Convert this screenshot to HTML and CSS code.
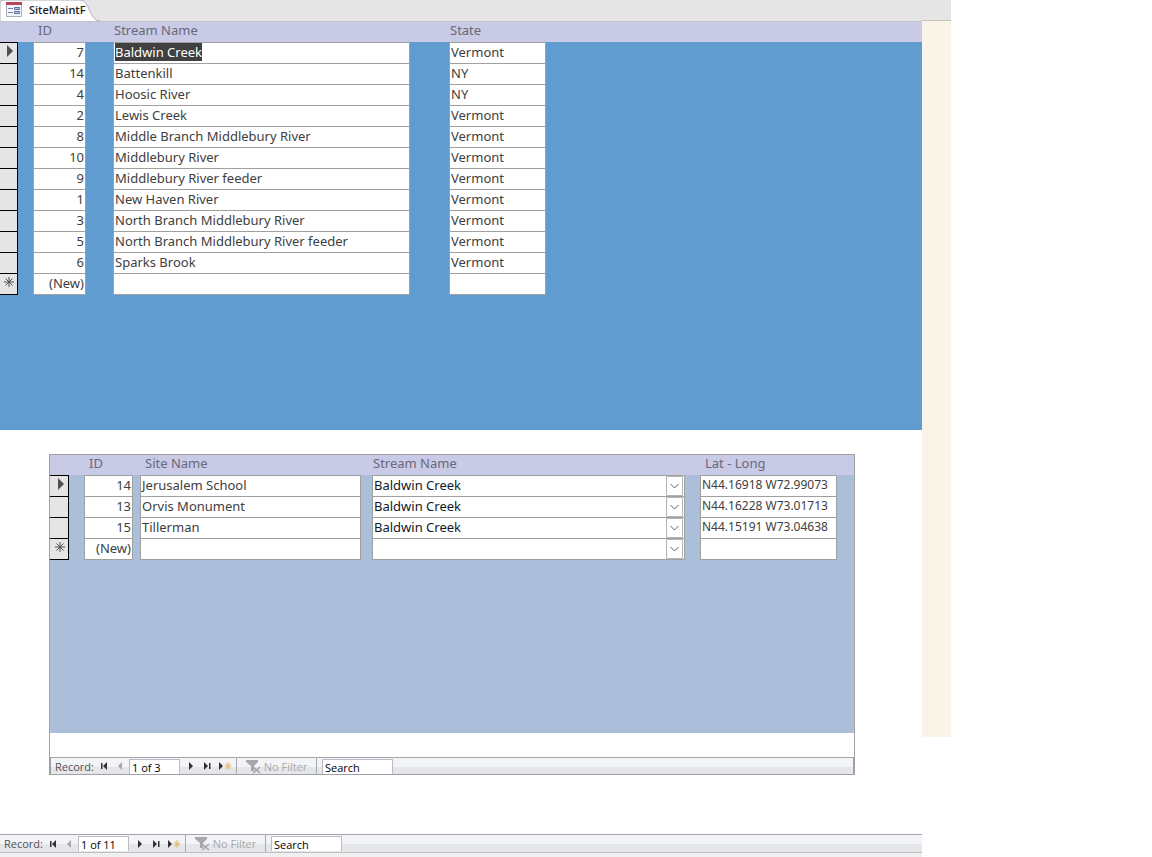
FILE: index.html
```html
<!DOCTYPE html>
<html lang="en">
<head>
<meta charset="utf-8">
<title>SiteMaintF</title>
<link rel="stylesheet" href="styles.css">
</head>
<body>
<svg class="defs" aria-hidden="true">
  <symbol id="first" viewBox="0 0 7 8"><path d="M0 1h1.500v6H0zM6 0v8L2 4z"/></symbol>
  <symbol id="prev" viewBox="0 0 7 8"><path d="M5 0v8L1 4z"/></symbol>
  <symbol id="next" viewBox="0 0 7 8"><path d="M1 0v8L5 4z"/></symbol>
  <symbol id="last" viewBox="0 0 7 8"><path d="M0 0v8L4 4zM5 1h1.500v6H5z"/></symbol>
  <symbol id="new" viewBox="0 0 13 8"><path d="M0 0v8L4 4z"/><path d="M9 0v8M5.500 4h7M6.500 1.500l5 5M11.500 1.500l-5 5" stroke="#e3b764" fill="none"/></symbol>
  <symbol id="filter" viewBox="0 0 15 15"><path d="M0 1h12v2L8 7v5H5V7L0 3z"/><path d="M7 8l7 6M14 8l-7 6" stroke="#a3a3a6" stroke-width="1.500" fill="none"/></symbol>
  <symbol id="current" viewBox="0 0 6 12"><path d="M0 0v12L6 6z"/></symbol>
  <symbol id="star" viewBox="0 0 10 10"><path d="M5 0v10M0 5h10M1.500 1.500l7 7M8.500 1.500l-7 7" stroke="#505050" fill="none"/></symbol>
</svg>
<div class="app">
  <header class="tabs">
    <div class="tab">
      <svg class="tab-shape" viewBox="0 0 100 21" aria-hidden="true"><path d="M0 21V3Q0 0 4 0H80C90 0 89 21 100 21z" fill="#fff"/><path d="M0 21V3Q0 0 4 0H80C90 0 89 21 100 21" fill="none" stroke="#b0b0b0"/></svg>
      <svg class="tab-icon" viewBox="0 0 16 15" aria-hidden="true"><path d="M.5.5h15v14H.5z" fill="#f4f5fb" stroke="#a9adc2"/><path d="M0 0h16v3H0z" fill="#b6455c"/><path d="M2 6.500h5M2 10.500h5" stroke="#7a84aa"/><path d="M8.500 5.500h5v2h-5zM8.500 9.500h5v2h-5z" fill="#b9c4e6" stroke="#5f6fa3"/></svg>
      <span class="tab-name">SiteMaintF</span>
    </div>
  </header>
  <main class="form">
    <section class="streams">
      <table class="grid">
        <colgroup><col class="w18"><col class="w15"><col class="w53"><col class="w27"><col class="w297"><col class="w39"><col class="w97"><col></colgroup>
        <thead><tr><th></th><th></th><th class="inset">ID</th><th></th><th>Stream Name</th><th></th><th>State</th><th></th></tr></thead>
        <tbody>
          <tr><td class="sel"><svg class="current"><use href="#current"/></svg></td><td></td><td class="box num">7</td><td></td><td class="box"><mark>Baldwin Creek</mark></td><td></td><td class="box">Vermont</td><td></td></tr>
          <tr><td class="sel"></td><td></td><td class="box num">14</td><td></td><td class="box">Battenkill</td><td></td><td class="box">NY</td><td></td></tr>
          <tr><td class="sel"></td><td></td><td class="box num">4</td><td></td><td class="box">Hoosic River</td><td></td><td class="box">NY</td><td></td></tr>
          <tr><td class="sel"></td><td></td><td class="box num">2</td><td></td><td class="box">Lewis Creek</td><td></td><td class="box">Vermont</td><td></td></tr>
          <tr><td class="sel"></td><td></td><td class="box num">8</td><td></td><td class="box">Middle Branch Middlebury River</td><td></td><td class="box">Vermont</td><td></td></tr>
          <tr><td class="sel"></td><td></td><td class="box num">10</td><td></td><td class="box">Middlebury River</td><td></td><td class="box">Vermont</td><td></td></tr>
          <tr><td class="sel"></td><td></td><td class="box num">9</td><td></td><td class="box">Middlebury River feeder</td><td></td><td class="box">Vermont</td><td></td></tr>
          <tr><td class="sel"></td><td></td><td class="box num">1</td><td></td><td class="box">New Haven River</td><td></td><td class="box">Vermont</td><td></td></tr>
          <tr><td class="sel"></td><td></td><td class="box num">3</td><td></td><td class="box">North Branch Middlebury River</td><td></td><td class="box">Vermont</td><td></td></tr>
          <tr><td class="sel"></td><td></td><td class="box num">5</td><td></td><td class="box">North Branch Middlebury River feeder</td><td></td><td class="box">Vermont</td><td></td></tr>
          <tr><td class="sel"></td><td></td><td class="box num">6</td><td></td><td class="box">Sparks Brook</td><td></td><td class="box">Vermont</td><td></td></tr>
          <tr><td class="sel"><svg class="star"><use href="#star"/></svg></td><td></td><td class="box num">(New)</td><td></td><td class="box"></td><td></td><td class="box"></td><td></td></tr>
        </tbody>
      </table>
    </section>
    <section class="detail">
      <div class="subform">
        <div class="sites">
          <table class="grid">
            <colgroup><col class="w19"><col class="w15"><col class="w49"><col class="w7"><col class="w221"><col class="w11"><col class="w313"><col class="w15"><col class="w137"><col></colgroup>
            <thead><tr><th></th><th></th><th class="inset">ID</th><th></th><th class="inset">Site Name</th><th></th><th>Stream Name</th><th></th><th class="inset">Lat - Long</th><th></th></tr></thead>
            <tbody>
              <tr><td class="sel"><svg class="current"><use href="#current"/></svg></td><td></td><td class="box num">14</td><td></td><td class="box">Jerusalem School</td><td></td><td class="box"><select class="combo" aria-label="Stream Name"><option>Baldwin Creek</option></select></td><td></td><td class="box coord">N44.16918 W72.99073</td><td></td></tr>
              <tr><td class="sel"></td><td></td><td class="box num">13</td><td></td><td class="box">Orvis Monument</td><td></td><td class="box"><select class="combo" aria-label="Stream Name"><option>Baldwin Creek</option></select></td><td></td><td class="box coord">N44.16228 W73.01713</td><td></td></tr>
              <tr><td class="sel"></td><td></td><td class="box num">15</td><td></td><td class="box">Tillerman</td><td></td><td class="box"><select class="combo" aria-label="Stream Name"><option>Baldwin Creek</option></select></td><td></td><td class="box coord">N44.15191 W73.04638</td><td></td></tr>
              <tr><td class="sel"><svg class="star"><use href="#star"/></svg></td><td></td><td class="box num">(New)</td><td></td><td class="box"></td><td></td><td class="box"><select class="combo" aria-label="Stream Name"><option></option></select></td><td></td><td class="box coord"></td><td></td></tr>
            </tbody>
          </table>
        </div>
        <div class="subfooter"></div>
        <nav class="recnav subnav">
          <label class="rec-label" for="rec-site">Record:</label>
          <button aria-label="First record"><svg><use href="#first"/></svg></button>
          <button aria-label="Previous record" disabled><svg><use href="#prev"/></svg></button>
          <input class="position" id="rec-site" value="1 of 3">
          <button aria-label="Next record"><svg><use href="#next"/></svg></button>
          <button aria-label="Last record"><svg><use href="#last"/></svg></button>
          <button class="new" aria-label="New record"><svg><use href="#new"/></svg></button>
          <button class="filter" disabled><svg><use href="#filter"/></svg>No Filter</button>
          <input class="search" aria-label="Search" value="Search">
        </nav>
      </div>
    </section>
    <nav class="recnav">
      <label class="rec-label" for="rec-stream">Record:</label>
      <button aria-label="First record"><svg><use href="#first"/></svg></button>
      <button aria-label="Previous record" disabled><svg><use href="#prev"/></svg></button>
      <input class="position" id="rec-stream" value="1 of 11">
      <button aria-label="Next record"><svg><use href="#next"/></svg></button>
      <button aria-label="Last record"><svg><use href="#last"/></svg></button>
      <button class="new" aria-label="New record"><svg><use href="#new"/></svg></button>
      <button class="filter" disabled><svg><use href="#filter"/></svg>No Filter</button>
      <input class="search" aria-label="Search" value="Search">
    </nav>
    <div class="status"></div>
  </main>
  <aside class="stripe"></aside>
</div>
</body>
</html>
```
FILE: styles.css
```css
* { box-sizing: border-box; }
body {
  margin: 0;
  background: #fff;
  color: #404040;
  font-family: "Noto Sans", "Open Sans", sans-serif;
  font-size: 13px;
}
.defs { display: none; }
.app {
  display: grid;
  grid-template-columns: minmax(860px, 1fr) 29px 201px;
  grid-template-rows: 21px 1fr;
  min-height: 100vh;
}

/* document tabs */
.tabs { grid-area: 1 / 1 / 2 / 3; background: #e5e5e5; }
.tab { position: relative; display: flex; align-items: center; gap: 7px; width: 100px; height: 21px; padding: 0 0 2px 6px; }
.tab-shape { position: absolute; inset: 0; width: 100px; height: 21px; }
.tab-icon { position: relative; width: 16px; height: 15px; flex: none; }
.tab-name { position: relative; color: #222; font-family: "Open Sans", sans-serif; font-size: 11px; font-weight: 600; line-height: 18px; }

.form { grid-area: 2 / 1; display: flex; flex-direction: column; min-width: 0; }
.stripe { grid-area: 2 / 2; height: 717px; margin-top: -1px; background: #f9f3e8; border-top: 1px solid #c6c2bb; }

/* continuous form grids */
.streams { height: 409px; background: #619cd1; }
.sites { height: 278px; background: #acbfda; }
.grid { width: 100%; table-layout: fixed; border-collapse: separate; border-spacing: 0; }
.grid th, .grid td { height: 21px; padding: 0; line-height: 18px; white-space: nowrap; overflow: hidden; }
.grid th { padding: 0 0 2px 1px; line-height: 16px; background: #c9cae6; color: #68687a; font-weight: 400; text-align: left; vertical-align: top; }
.streams th { border-top: 1px solid #c4c4cc; }
.sites th { height: 20px; }
.grid th.inset { padding-left: 5px; }
.grid .box { padding: 0 1px; background: #fff; border: 1px solid #a0a0a0; border-bottom: 0; vertical-align: top; }
.grid .num { text-align: right; }
.grid .coord { font-size: 12px; }
.grid .sel { background: #e5e5e5; border-top: 1px solid #000; border-right: 1px solid #000; vertical-align: top; text-align: right; }
.grid tr:last-child .box { height: 22px; border-bottom: 1px solid #a0a0a0; }
.grid tr:last-child .sel { border-bottom: 1px solid #000; }
.current { display: block; width: 6px; height: 12px; margin: 2px 4px 0 auto; fill: #505050; }
.star { display: block; width: 10px; height: 10px; margin: 3px 3px 0 auto; }
mark { display: inline-block; background: #404040; color: #fff; }
.grid .combo {
  display: block;
  appearance: none;
  width: 100%;
  height: 20px;
  padding: 0 0 2px;
  border: 0;
  border-radius: 0;
  font: inherit;
  color: #101828;
  background: #fff url("data:image/svg+xml,%3Csvg xmlns='http://www.w3.org/2000/svg' width='17' height='20'%3E%3Cpath d='M.5.5h16v19H.5z' fill='%23fff' stroke='%23b4b4b4'/%3E%3Cpath d='M4.500 8l4 4 4-4' fill='none' stroke='%23606060'/%3E%3C/svg%3E") right center no-repeat;
}

.w7 { width: 7px; } .w11 { width: 11px; } .w15 { width: 15px; } .w18 { width: 18px; } .w19 { width: 19px; }
.w27 { width: 27px; } .w39 { width: 39px; } .w49 { width: 49px; } .w53 { width: 53px; } .w97 { width: 97px; }
.w137 { width: 137px; } .w221 { width: 221px; } .w297 { width: 297px; } .w313 { width: 313px; }

/* subform */
.detail { flex: 1; padding: 24px 67px 24px 49px; }
.subform { border: 1px solid #a0a0a6; }
.subfooter { height: 24px; }

/* record navigation */
.recnav {
  display: flex;
  align-items: stretch;
  height: 18px;
  padding-left: 4px;
  border-top: 1px solid #a4a4aa;
  background: linear-gradient(#f3f4f7 0 9px, #e5e6ea 9px);
  font-family: "Open Sans", sans-serif;
  font-size: 11px;
  line-height: 17px;
}
.subnav { height: 17px; border-left: 1px solid #a0a0a6; border-right: 1px solid #a0a0a6; }
.rec-label { flex: none; width: 41px; color: #505050; }
.recnav button { display: flex; flex: none; align-items: center; justify-content: center; width: 16px; padding: 0; border: 0; background: none; font: inherit; white-space: nowrap; fill: #303030; }
.recnav button svg { flex: none; width: 7px; height: 8px; }
.recnav button:disabled { color: #a8a8ac; fill: #a8a8ac; }
.recnav input { height: 15px; margin-top: 1px; padding: 0 2px; border: 1px solid #bcbcc2; border-bottom: 0; background: #fff; color: #000; font: inherit; line-height: 14px; }
.recnav .position { width: 51px; margin-left: 1px; margin-right: 3px; }
.recnav .new { width: 21px; }
.recnav .new svg { width: 13px; }
.recnav .filter { width: 81px; gap: 3px; border: 1px solid #a8a8b0; border-width: 0 1px; }
.recnav .filter svg { width: 15px; height: 15px; }
.recnav .search { width: 71px; margin-left: 5px; }
.status { height: 5px; background: #f0f0f0; border-top: 1px solid #c0c0c4; }
```
